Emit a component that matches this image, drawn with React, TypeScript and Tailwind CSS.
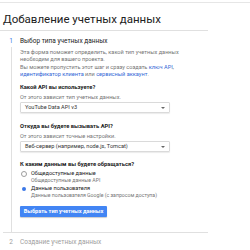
import React from "react";

export default function App() {
  return (
    <div className="w-[250px] h-[250px] overflow-hidden bg-white text-[#212121]" style={{ fontFamily: "Roboto, 'Noto Sans', sans-serif" }}>
      <div className="h-[2px]" />
      <div className="border-t border-[#e6e6e6]" />
      <div className="w-[208px] border-b border-[#e0e0e0] pl-[3px] pt-[9px] pb-[4px]">
        <div className="text-[11.5px] leading-[14px] text-[#212121]">Добавление учетных данных</div>
      </div>
      <div className="flex">
        <div className="w-[20px] flex flex-col items-center shrink-0">
          <div className="mt-[6px] text-[6.5px] leading-[8px] text-[#3b78e7] w-[20px] text-center pl-[2px]">1</div>
          <div className="ml-[2px] w-px flex-1 bg-[#e0e0e0] mt-[2px]" />
        </div>
        <div className="flex flex-col pb-[15px]">
          <div className="mt-[6px] text-[6.5px] leading-[8px] text-[#212121]">Выбор типа учетных данных</div>
          <div className="mt-[4px] text-[5.6px] leading-[7px] text-[#757575]">
            <div>Эта форма поможет определить, какой тип учетных данных</div>
            <div>необходим для вашего проекта.</div>
            <div className="mt-[1px]">Вы можете пропустить этот шаг и сразу создать <span className="text-[#3367d6]">ключ API</span>,</div>
            <div><span className="text-[#3367d6]">идентификатор клиента</span> или <span className="text-[#3367d6]">сервисный аккаунт</span>.</div>
          </div>
          <div className="mt-[6px] text-[5.8px] leading-[7px] font-bold text-[#212121]">Какой API вы используете?</div>
          <div className="mt-[3px] text-[5.6px] leading-[7px] text-[#757575]">От этого зависит тип учетных данных.</div>
          <div className="mt-[1px] w-[150px] h-[11px] border border-[#dadada] rounded-[1px] flex items-center justify-between px-[4px] shadow-[0_1px_1px_rgba(0,0,0,0.08)]">
            <span className="text-[5.6px] text-[#333]">YouTube Data API v3</span>
            <span className="w-0 h-0 border-l-[2px] border-r-[2px] border-t-[2px] border-l-transparent border-r-transparent border-t-[#666]" />
          </div>
          <div className="mt-[10px] text-[5.8px] leading-[7px] font-bold text-[#212121]">Откуда вы будете вызывать API?</div>
          <div className="mt-[3px] text-[5.6px] leading-[7px] text-[#757575]">От этого зависит точные настройки.</div>
          <div className="mt-[1px] w-[150px] h-[11px] border border-[#dadada] rounded-[1px] flex items-center justify-between px-[4px] shadow-[0_1px_1px_rgba(0,0,0,0.08)]">
            <span className="text-[5.6px] text-[#333]">Веб-сервер (например, node.js, Tomcat)</span>
            <span className="w-0 h-0 border-l-[2px] border-r-[2px] border-t-[2px] border-l-transparent border-r-transparent border-t-[#666]" />
          </div>
          <div className="mt-[9px] text-[5.8px] leading-[7px] font-bold text-[#212121]">К каким данным вы будете обращаться?</div>
          <div className="mt-[2px] flex items-center">
            <span className="ml-[1px] w-[6px] h-[6px] rounded-full border border-[#9e9e9e]" />
            <span className="ml-[4px] text-[5.6px] leading-[7px] text-[#212121]">Общедоступные данные</span>
          </div>
          <div className="ml-[11px] text-[5.2px] leading-[7px] text-[#757575]">Общедоступные данные API</div>
          <div className="mt-[1px] flex items-center">
            <span className="ml-[1px] w-[6px] h-[6px] rounded-full flex items-center justify-center">
              <span className="w-[4px] h-[4px] rounded-full bg-[#3b78e7]" />
            </span>
            <span className="ml-[4px] text-[5.6px] leading-[7px] text-[#212121]">Данные пользователя</span>
          </div>
          <div className="ml-[11px] text-[5.2px] leading-[7px] text-[#757575]">Данные пользователя Google (с запросом доступа)</div>
          <div className="mt-[7px] w-[87px] h-[11px] bg-[#4285f4] rounded-[1px] flex items-center justify-center shadow-[0_1px_1px_rgba(0,0,0,0.2)]">
            <span className="text-[5.6px] font-bold text-white">Выбрать тип учетных данных</span>
          </div>
        </div>
      </div>
      <div className="ml-[3px] w-[205px] border-t border-[#e0e0e0]" />
      <div className="flex items-center mt-[5px]">
        <span className="w-[20px] text-center pl-[2px] text-[6.5px] leading-[8px] text-[#9e9e9e]">2</span>
        <span className="text-[6.5px] leading-[8px] text-[#9e9e9e]">Создание учетных данных</span>
      </div>
    </div>
  );
}
